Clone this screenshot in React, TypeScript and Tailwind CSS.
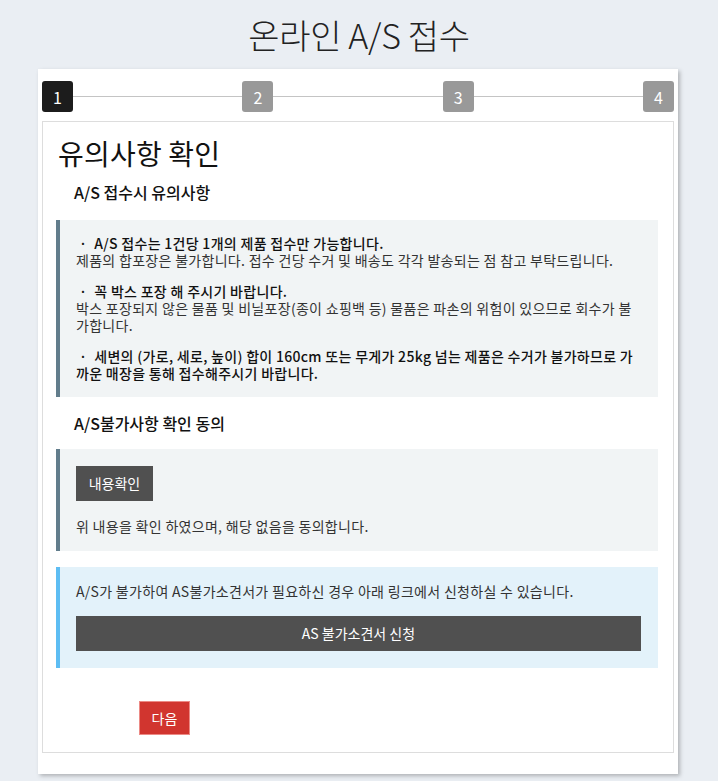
import React from 'react';

const steps = [1, 2, 3, 4];

const notices = [
    {
        title: 'A/S 접수는 1건당 1개의 제품 접수만 가능합니다.',
        body: '제품의 합포장은 불가합니다. 접수 건당 수거 및 배송도 각각 발송되는 점 참고 부탁드립니다.',
    },
    {
        title: '꼭 박스 포장 해 주시기 바랍니다.',
        body: '박스 포장되지 않은 물품 및 비닐포장(종이 쇼핑백 등) 물품은 파손의 위험이 있으므로 회수가 불가합니다.',
    },
    {
        title: '세변의 (가로, 세로, 높이) 합이 160cm 또는 무게가 25kg 넘는 제품은 수거가 불가하므로 가까운 매장을 통해 접수해주시기 바랍니다.',
        body: '',
    },
];

export default function App() {
    return (
        <div className="min-h-screen bg-[#eaeef3] pb-2 font-['Noto_Sans_CJK_KR','Noto_Sans',sans-serif] text-[#222]">
            <h1 className="pt-[12px] pb-[12px] text-center text-[34px] leading-[45px] font-light tracking-[-0.3px] text-[#222]">
                온라인 A/S 접수
            </h1>

            <div className="ml-[38px] w-[640px] bg-white px-[4px] pt-[12px] pb-[21px] shadow-[2px_2px_4px_rgba(0,0,0,0.25)]">
                {/* steps */}
                <div className="flex items-center">
                    {steps.map((n, i) => (
                        <React.Fragment key={n}>
                            {i > 0 && <div className="h-px flex-1 bg-[#c4c4c4]" />}
                            <div
                                className={`flex h-[31px] w-[31px] items-center justify-center rounded-[3px] text-[16px] text-white ${
                                    n === 1 ? 'bg-[#1c1c1c]' : 'bg-[#999999]'
                                }`}
                            >
                                {n}
                            </div>
                        </React.Fragment>
                    ))}
                </div>

                <div className="mt-[9px] border border-[#dddddd] pb-[17px]">
                    <h2 className="pl-[15px] pt-[15px] text-[28px] leading-[33px] font-normal tracking-[0.2px] text-[#111]">
                        유의사항 확인
                    </h2>
                    <h3 className="mt-[12px] pl-[31px] text-[16px] leading-[20px] font-medium text-[#111]">
                        A/S 접수시 유의사항
                    </h3>

                    <div className="mt-[18px] ml-[13px] mr-[15px] border-l-4 border-[#627d8c] bg-[#f1f4f5] pl-[16px] pr-[18px] pt-[15px] pb-[15px] text-[14px] leading-[17px] tracking-[0.3px] text-[#333]">
                        {notices.map((item, idx) => (
                            <div key={idx} className={idx > 0 ? 'mt-[14px]' : ''}>
                                <p className="indent-[3px] font-medium text-[#111]">
                                    ·&nbsp;&nbsp;{item.title}
                                </p>
                                {item.body && <p className="font-normal">{item.body}</p>}
                            </div>
                        ))}
                    </div>

                    <h3 className="mt-[16px] pl-[31px] text-[16px] leading-[20px] font-medium text-[#111]">
                        A/S불가사항 확인 동의
                    </h3>

                    <div className="mt-[16px] ml-[13px] mr-[15px] border-l-4 border-[#627d8c] bg-[#f1f4f5] pl-[16px] pr-[18px] pt-[17px] pb-[16px]">
                        <button className="block h-[35px] w-[77px] bg-[#505050] text-[14px] text-white">내용확인</button>
                        <p className="mt-[17px] text-[14px] leading-[17px] tracking-[0.3px] font-normal text-[#333]">
                            위 내용을 확인 하였으며, 해당 없음을 동의합니다.
                        </p>
                    </div>

                    <div className="mt-[16px] ml-[13px] mr-[15px] border-l-4 border-[#5dbdf3] bg-[#e3f2fa] pl-[16px] pr-[17px] pt-[16px] pb-[17px]">
                        <p className="text-[14px] leading-[17px] tracking-[0.3px] font-normal text-[#333]">
                            A/S가 불가하여 AS불가소견서가 필요하신 경우 아래 링크에서 신청하실 수 있습니다.
                        </p>
                        <button className="mt-[16px] block h-[35px] w-full bg-[#505050] text-[14px] text-white">
                            AS 불가소견서 신청
                        </button>
                    </div>

                    <div className="mt-[33px] flex pl-[96px]">
                        <button className="h-[34px] w-[51px] border border-[#ec8a85] bg-[#d1352f] text-[14px] text-white">
                            다음
                        </button>
                    </div>
                </div>
            </div>
        </div>
    );
}
